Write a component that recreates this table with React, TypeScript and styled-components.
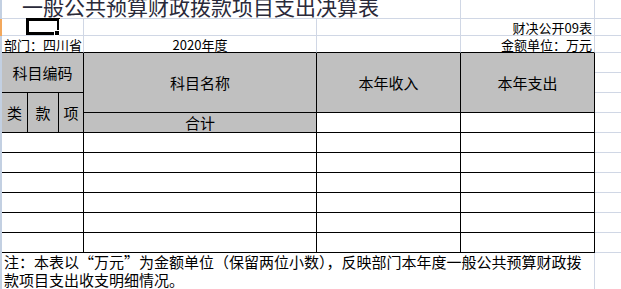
import React from "react";
import styled, { createGlobalStyle } from "styled-components";

const GRID = "#d0d7e5";
const INK = "#000";
const HEAD_BG = "#c0c0c0";

type Line = "g" | "k" | "n";
const line = (l?: Line) =>
  l === "k" ? `1px solid ${INK}` : l === "g" ? `1px solid ${GRID}` : "none";

const Global = createGlobalStyle`
  html, body { margin: 0; padding: 0; background: #fff; }
  * { box-sizing: border-box; }
`;

const Sheet = styled.div`
  display: grid;
  grid-template-columns: 2px 26px 31px 25px 233px 144px 134px 1fr;
  grid-template-rows: 19px 17px 17px 20px 20px 20px 20px repeat(6, 20px) 37px;
  width: 621px;
  height: 289px;
  overflow: hidden;
  background: #fff;
  color: #000;
  font-family: "Noto Sans CJK SC", "Liberation Sans", sans-serif;
`;

const RowEdge = styled.div<{ $row: string; $active?: boolean }>`
  grid-column: 1;
  grid-row: ${(p) => p.$row};
  background: ${(p) => (p.$active ? "#f3a85c" : "#c3d0e2")};
`;

type CellProps = {
  $col: string;
  $row: string;
  $r?: Line;
  $b?: Line;
  $bg?: string;
  $justify?: string;
  $align?: string;
};

const Cell = styled.div<CellProps>`
  grid-column: ${(p) => p.$col};
  grid-row: ${(p) => p.$row};
  position: relative;
  display: flex;
  justify-content: ${(p) => p.$justify ?? "center"};
  align-items: ${(p) => p.$align ?? "center"};
  background: ${(p) => p.$bg ?? "#fff"};
  border-right: ${(p) => line(p.$r)};
  border-bottom: ${(p) => line(p.$b)};
  min-width: 0;
  white-space: nowrap;
`;

const TitleCell = styled(Cell)`
  font-size: 21px;
  line-height: 21px;
  color: #2a2a3a;
  padding: 0 0 1px 20px;
  overflow: visible;
`;

const InfoCell = styled(Cell)`
  font-size: 13px;
  line-height: 15px;
  padding: 0 2px 0 2px;
`;

const HeaderCell = styled(Cell)`
  font-size: 15px;
  line-height: 18px;
`;

const BodyCell = styled(Cell)``;

const NoteCell = styled(Cell)`
  display: block;
  white-space: normal;
  font-size: 15px;
  line-height: 18px;
  padding: 0 2px 0 2px;
  font-feature-settings: "fwid";
  overflow: visible;
`;

const SelectionFrame = styled.div`
  position: absolute;
  left: -2px;
  top: -1px;
  width: 34px;
  height: 17px;
  border: 3px solid #000;
  pointer-events: none;
`;

const FillHandle = styled.div`
  position: absolute;
  right: -3px;
  bottom: -4px;
  width: 6px;
  height: 6px;
  background: #000;
  border: 1px solid #fff;
`;

export default function App() {
  const bodyRows = [8, 9, 10, 11, 12, 13];
  return (
    <>
      <Global />
      <Sheet lang="zh-CN">
        <RowEdge $row="1" />
        <RowEdge $row="2" $active />
        <RowEdge $row="3 / 15" />

        {/* Row 1: title */}
        <TitleCell $col="2 / 7" $row="1" $r="g" $b="g" $justify="flex-start" $align="flex-end">
          一般公共预算财政拨款项目支出决算表
        </TitleCell>
        <Cell $col="7" $row="1" $r="g" $b="g" />
        <Cell $col="8" $row="1" $b="g" />

        {/* Row 2 */}
        <Cell $col="2" $row="2" $b="g" />
        <Cell $col="3" $row="2" $b="g">
          <SelectionFrame>
            <FillHandle />
          </SelectionFrame>
        </Cell>
        <Cell $col="4" $row="2" $r="g" $b="g" />
        <Cell $col="5" $row="2" $r="g" $b="g" />
        <Cell $col="6" $row="2" $r="g" $b="g" />
        <InfoCell $col="7" $row="2" $r="g" $b="g" $justify="flex-end">
          财决公开09表
        </InfoCell>
        <Cell $col="8" $row="2" $b="g" />

        {/* Row 3 */}
        <InfoCell $col="2 / 5" $row="3" $r="g" $b="k" $justify="flex-start">
          部门：四川省
        </InfoCell>
        <InfoCell $col="5" $row="3" $r="g" $b="k">
          2020年度
        </InfoCell>
        <Cell $col="6" $row="3" $r="g" $b="k" />
        <InfoCell $col="7" $row="3" $r="g" $b="k" $justify="flex-end">
          金额单位：万元
        </InfoCell>
        <Cell $col="8" $row="3" $b="g" />

        {/* Header */}
        <HeaderCell $col="2 / 5" $row="4 / 6" $r="k" $b="k" $bg={HEAD_BG}>
          科目编码
        </HeaderCell>
        <HeaderCell $col="5" $row="4 / 7" $r="k" $b="k" $bg={HEAD_BG}>
          科目名称
        </HeaderCell>
        <HeaderCell $col="6" $row="4 / 7" $r="k" $b="k" $bg={HEAD_BG}>
          本年收入
        </HeaderCell>
        <HeaderCell $col="7" $row="4 / 7" $r="k" $b="k" $bg={HEAD_BG}>
          本年支出
        </HeaderCell>
        <Cell $col="8" $row="4" $b="g" />
        <Cell $col="8" $row="5" $b="g" />
        <Cell $col="8" $row="6" $b="g" />

        <HeaderCell $col="2" $row="6 / 8" $r="k" $b="k" $bg={HEAD_BG}>
          类
        </HeaderCell>
        <HeaderCell $col="3" $row="6 / 8" $r="k" $b="k" $bg={HEAD_BG}>
          款
        </HeaderCell>
        <HeaderCell $col="4" $row="6 / 8" $r="k" $b="k" $bg={HEAD_BG}>
          项
        </HeaderCell>
        <HeaderCell $col="5" $row="7" $r="k" $b="k" $bg={HEAD_BG} $align="flex-end">
          合计
        </HeaderCell>
        <BodyCell $col="6" $row="7" $r="k" $b="k" />
        <BodyCell $col="7" $row="7" $r="k" $b="k" />
        <Cell $col="8" $row="7" $b="g" />

        {/* Body rows */}
        {bodyRows.map((r) => (
          <React.Fragment key={r}>
            <BodyCell $col="2 / 5" $row={String(r)} $r="k" $b="k" />
            <BodyCell $col="5" $row={String(r)} $r="k" $b="k" />
            <BodyCell $col="6" $row={String(r)} $r="k" $b="k" />
            <BodyCell $col="7" $row={String(r)} $r="k" $b="k" />
            <Cell $col="8" $row={String(r)} $b="g" />
          </React.Fragment>
        ))}

        {/* Note */}
        <NoteCell $col="2 / 8" $row="14" $r="g">
          注：本表以“万元”为金额单位（保留两位小数），反映部门本年度一般公共预算财政拨款项目支出收支明细情况。
        </NoteCell>
        <Cell $col="8" $row="14" />
      </Sheet>
    </>
  );
}
